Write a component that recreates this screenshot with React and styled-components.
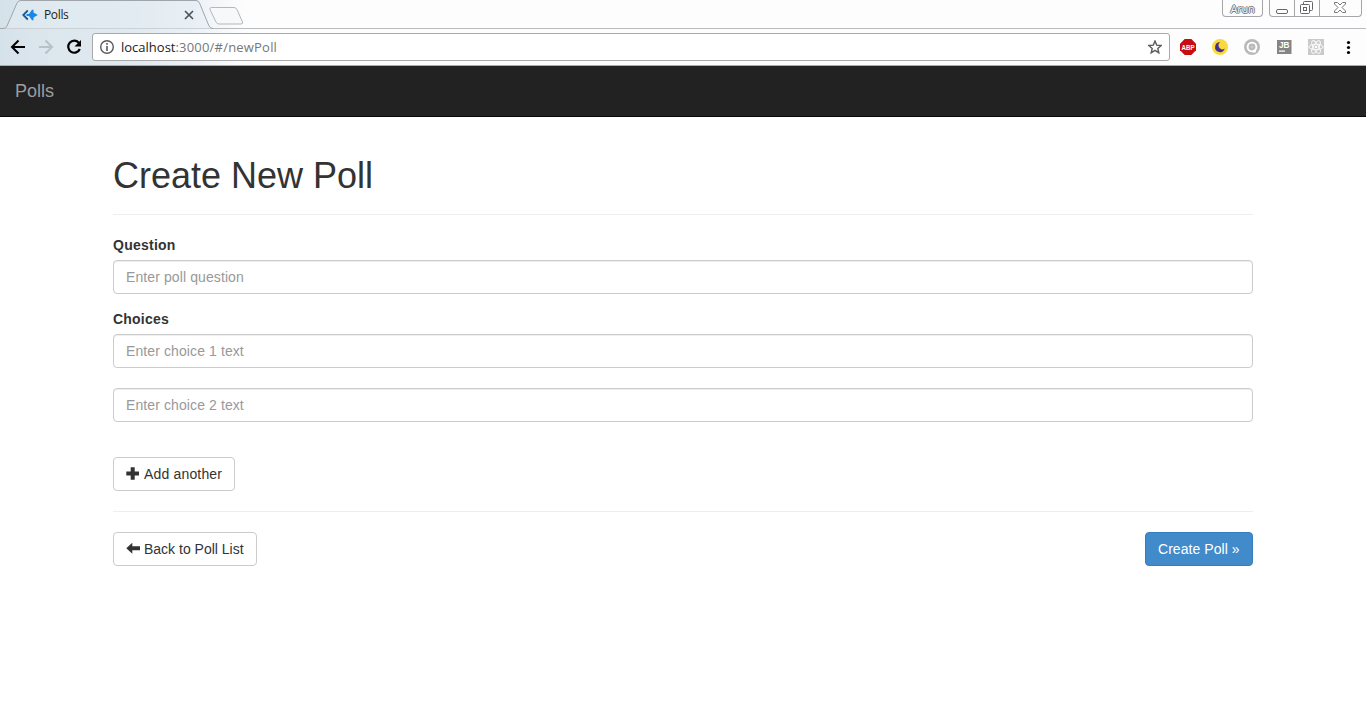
import React from "react";
import styled, { createGlobalStyle } from "styled-components";

const GlobalStyle = createGlobalStyle`
  *, *::before, *::after { box-sizing: border-box; }
  body {
    margin: 0;
    background: #fff;
    color: #333;
    font: 14px/20px "Liberation Sans", Arial, sans-serif;
    overflow: hidden;
  }
`;

const Chrome = styled.header`
  height: 66px;
  display: flex;
  flex-direction: column;
  border-bottom: 1px solid #a9acac;
  background: linear-gradient(90deg, #d6e2ea 0, #dde7ee 60px, #e0e9f0 130px, #ebf0f5 190px, #fdfdfe 245px, #fdfdfd 100%);
`;

const TabStrip = styled.div`
  height: 29px;
  display: flex;
  align-items: flex-start;
  border-bottom: 1px solid #b9babd;
`;

const Tab = styled.div`
  position: relative;
  width: 209px;
  height: 29px;
  flex: none;
  display: flex;
  align-items: center;
  padding: 1px 14px 0 22px;
  font: 12px/16px "Open Sans", "Noto Sans", sans-serif;
  color: #222;
`;

const TabOutline = styled.svg`
  position: absolute;
  left: 0;
  top: 0;
`;

const TabTitle = styled.span`
  position: relative;
  flex: 1;
  margin-left: 6px;
  letter-spacing: -0.35px;
`;

const TabIcon = styled.svg`
  position: relative;
  flex: none;
`;

const Icon = styled.svg`
  display: block;
  flex: none;
`;

const WindowControls = styled.div`
  margin-left: auto;
  margin-right: 4px;
  display: flex;
  gap: 6px;
`;

const ControlGroup = styled.div`
  display: flex;
  height: 17px;
  border: 1px solid #a6a6a9;
  border-top: 0;
  border-radius: 0 0 4px 4px;
  background: #fdfdfd;
`;

const Control = styled.div`
  width: ${(p) => p.$width}px;
  display: flex;
  align-items: center;
  justify-content: center;
  padding: 0 2px 1px 0;
  font: 11px/16px "Open Sans", sans-serif;
  & + & { border-left: 1px solid #a6a6a9; }
`;

const UserName = styled.span`
  margin: 2px 0 0 2px;
  letter-spacing: -0.2px;
  color: #f4f4f4;
  text-shadow: 0 1px #777, 1px 0 #777, -1px 0 #777, 0 -1px #777;
`;

const Toolbar = styled.div`
  flex: 1;
  display: flex;
  align-items: center;
  padding: 0 10px;
`;

const NavIcons = styled.div`
  display: flex;
  gap: 12px;
  width: 82px;
`;

const AddressBar = styled.div`
  width: 1078px;
  height: 28px;
  display: flex;
  align-items: center;
  padding: 0 7px 0 6px;
  border: 1px solid #a9a9ac;
  border-radius: 3px;
  background: #fff;
`;

const Url = styled.span`
  flex: 1;
  margin-left: 6px;
  font: 13px/18px "Open Sans", "Noto Sans", sans-serif;
  letter-spacing: 0.2px;
  color: #777;
`;

const Host = styled.span`
  color: #222;
  letter-spacing: 0;
`;

const Extensions = styled.div`
  display: flex;
  gap: 16px;
  margin-left: 10px;
`;

const Navbar = styled.nav`
  height: 51px;
  padding: 15px;
  background: #222;
  border-bottom: 1px solid #080808;
`;

const Brand = styled.a`
  display: block;
  font-size: 18px;
  line-height: 20px;
  color: #9d9d9d;
`;

const Page = styled.main`
  width: 1140px;
  margin: 39px auto 0;
`;

const PageHeader = styled.div`
  height: 59px;
  border-bottom: 1px solid #eee;
  margin-bottom: 20px;
`;

const Title = styled.h1`
  margin: 0;
  font-size: 36px;
  font-weight: 400;
  line-height: 40px;
`;

const Field = styled.div`
  margin-bottom: ${(p) => p.$gap}px;
`;

const Label = styled.label`
  display: block;
  margin-bottom: 5px;
  font-weight: 700;
  letter-spacing: ${(p) => p.$tracking || 0}px;
`;

const Input = styled.input`
  display: block;
  width: 100%;
  height: 34px;
  padding: 6px 12px;
  border: 1px solid #ccc;
  border-radius: 4px;
  background: #fff;
  box-shadow: inset 0 1px 1px rgba(0, 0, 0, 0.075);
  font: 14px/20px "Liberation Sans", Arial, sans-serif;
  letter-spacing: 0.1px;
  &::placeholder { color: #999; opacity: 1; }
`;

const Button = styled.button`
  display: flex;
  align-items: center;
  gap: 4px;
  height: 34px;
  width: ${(p) => p.$width}px;
  padding: 0 0 0 12px;
  border: 1px solid ${(p) => (p.$primary ? "#357ebd" : "#ccc")};
  border-radius: 4px;
  background: ${(p) => (p.$primary ? "#428bca" : "#fff")};
  color: ${(p) => (p.$primary ? "#fff" : "#333")};
  font: 14px/20px "Liberation Sans", Arial, sans-serif;
  letter-spacing: ${(p) => p.$tracking || 0}px;
  white-space: nowrap;
`;

const Divider = styled.hr`
  margin: 20px 0;
  border: 0;
  border-top: 1px solid #eee;
`;

const Actions = styled.div`
  display: flex;
  justify-content: space-between;
`;

function BrowserTab() {
  return (
    <Tab>
      <TabOutline width="214" height="29" viewBox="0 0 214 29">
        <path d="M0 29V28.5H3Q6 28.5 7 26L17 3Q18.5.5 21 .5H196Q198.500.5 199.500 3L209 26Q210.500 28.500 213 28.500V29Z" fill="#e4edf4" fillOpacity=".45" />
        <path d="M0 28.500H3Q6 28.500 7 26L17 3Q18.500.500 21 .500H196Q198.500.500 199.500 3L209 26Q210.500 28.500 213 28.500" fill="none" stroke="#a0a5aa" />
      </TabOutline>
      <TabIcon width="16" height="12" viewBox="0 0 16 12">
        <path d="M5.800 1.500L1.300 6L5.800 10.500" fill="none" stroke="#145c98" strokeWidth="1.800" />
        <path d="M6.300 6L10 .8H11.500V3.500L15.800 6L11.500 8.500V11.200H10Z" fill="#1689e8" />
        <path d="M4.500 6H7.500" stroke="#1689e8" strokeWidth="2" />
      </TabIcon>
      <TabTitle>Polls</TabTitle>
      <TabIcon width="12" height="10" viewBox="0 0 12 10">
        <path d="M2 1L10 9M10 1L2 9" stroke="#505356" strokeWidth="1.700" />
      </TabIcon>
    </Tab>
  );
}

function BrowserChrome() {
  return (
    <Chrome>
      <TabStrip>
        <BrowserTab />
        <Icon width="36" height="28" viewBox="0 0 36 28">
          <path d="M2.500 7.500H25Q27 7.500 28 9.500L33.500 22Q34.200 24 32 24H10Q8 24 7 22L1 9.500Q.300 7.500 2.500 7.500Z" fill="#f6f8fa" stroke="#b4b7bb" />
        </Icon>
        <WindowControls>
          <ControlGroup>
            <Control $width={39}>
              <UserName>Arun</UserName>
            </Control>
          </ControlGroup>
          <ControlGroup>
            <Control $width={24}>
              <Icon width="14" height="14" viewBox="0 0 14 14">
                <rect x="2.500" y="8.500" width="11" height="4" rx="1.500" fill="#fff" stroke="#66666a" />
              </Icon>
            </Control>
            <Control $width={25}>
              <Icon width="13" height="13" viewBox="0 0 13 13" fill="#fff" stroke="#66666a">
                <rect x="3.500" y=".5" width="9" height="9" rx="1" />
                <rect x=".5" y="3.500" width="9" height="9" rx="1" />
                <rect x="3.500" y="6.500" width="3" height="3" />
              </Icon>
            </Control>
            <Control $width={42}>
              <Icon width="12" height="11" viewBox="0 0 12 11">
                <path d="M.5.5H3.500L6 3L8.500.5H11.500V2L8 5.500L11.500 9V10.500H8.500L6 8L3.500 10.500H.5V9L4 5.500L.5 2Z" fill="#fff" stroke="#77777a" />
              </Icon>
            </Control>
          </ControlGroup>
        </WindowControls>
      </TabStrip>
      <Toolbar>
        <NavIcons>
          <Icon width="16" height="16" viewBox="0 0 16 16" fill="none" stroke="#000" strokeWidth="2">
            <path d="M15 8H2.500M8.500 1.500L2 8L8.500 14.500" />
          </Icon>
          <Icon width="16" height="16" viewBox="0 0 16 16" fill="none" stroke="#b9c0c6" strokeWidth="2">
            <path d="M1 8H13.500M7.500 1.500L14 8L7.500 14.500" />
          </Icon>
          <Icon width="16" height="16" viewBox="0 0 16 16">
            <path d="M12.800 3.800A6 6 0 1 0 13.800 10" fill="none" stroke="#000" strokeWidth="2.200" />
            <path d="M15 1V7.500H8.500Z" />
          </Icon>
        </NavIcons>
        <AddressBar>
          <Icon width="16" height="16" viewBox="0 0 16 16">
            <circle cx="8" cy="8" r="6.300" fill="none" stroke="#5a5a5a" strokeWidth="1.400" />
            <path d="M7.200 4H8.800V5.700H7.200ZM7.200 7H8.800V12H7.200Z" fill="#5a5a5a" />
          </Icon>
          <Url><Host>localhost</Host>:3000/#/newPoll</Url>
          <Icon width="14" height="14" viewBox="0 0 14 14">
            <path d="M7 1L8.700 5.100L13.200 5.500L9.800 8.400L10.800 12.800L7 10.400L3.200 12.800L4.200 8.400L.8 5.500L5.300 5.100Z" fill="none" stroke="#5a5a5a" strokeWidth="1.400" />
          </Icon>
        </AddressBar>
        <Extensions>
          <Icon width="16" height="16" viewBox="0 0 16 16">
            <path d="M4.700 0H11.300L16 4.700V11.300L11.300 16H4.700L0 11.300V4.700Z" fill="#c70d0d" />
            <text x="1.500" y="10.800" textLength="13" lengthAdjust="spacingAndGlyphs" fontFamily="Liberation Sans, sans-serif" fontSize="8" fontWeight="700" fill="#fff">ABP</text>
          </Icon>
          <Icon width="16" height="16" viewBox="0 0 16 16">
            <circle cx="8" cy="8" r="8" fill="#fbd93b" />
            <path d="M8.200 3.300A4.900 4.900 0 1 0 12.700 9.500A3.800 3.800 0 0 1 8.200 3.300Z" fill="#44318d" />
          </Icon>
          <Icon width="16" height="16" viewBox="0 0 16 16">
            <circle cx="8" cy="8" r="8" fill="#bababa" />
            <circle cx="8" cy="8" r="4.400" fill="none" stroke="#fff" strokeWidth="1.900" />
            <path d="M8.500 11.500L12 9.500V13L9.500 14Z" fill="#fff" />
            <circle cx="8" cy="8" r="1.300" fill="#ccc" />
          </Icon>
          <Icon width="16" height="16" viewBox="0 0 16 16">
            <rect x="1" y="1" width="14.500" height="14" fill="#858585" />
            <text x="3" y="8.800" textLength="10.500" lengthAdjust="spacingAndGlyphs" fontFamily="Liberation Sans, sans-serif" fontSize="8.500" fontWeight="700" fill="#fff">JB</text>
            <rect x="3" y="11.500" width="6" height="1.200" fill="#fff" />
          </Icon>
          <Icon width="16" height="16" viewBox="0 0 16 16">
            <rect width="16" height="16" fill="#cacaca" />
            <g fill="none" stroke="#fff" strokeWidth=".9">
              <ellipse cx="8" cy="8" rx="7" ry="2.700" />
              <ellipse cx="8" cy="8" rx="7" ry="2.700" transform="rotate(60 8 8)" />
              <ellipse cx="8" cy="8" rx="7" ry="2.700" transform="rotate(120 8 8)" />
            </g>
            <circle cx="8" cy="8" r="1.300" fill="#fff" />
          </Icon>
          <Icon width="16" height="16" viewBox="0 0 16 16">
            <circle cx="8.500" cy="3.500" r="1.600" />
            <circle cx="8.500" cy="8.500" r="1.600" />
            <circle cx="8.500" cy="13.500" r="1.600" />
          </Icon>
        </Extensions>
      </Toolbar>
    </Chrome>
  );
}

export default function App() {
  return (
    <>
      <GlobalStyle />
      <BrowserChrome />
      <Navbar>
        <Brand>Polls</Brand>
      </Navbar>
      <Page>
        <PageHeader>
          <Title>Create New Poll</Title>
        </PageHeader>
        <Field $gap={15}>
          <Label htmlFor="question" $tracking={0.25}>Question</Label>
          <Input id="question" placeholder="Enter poll question" />
        </Field>
        <Field $gap={20}>
          <Label htmlFor="choice1" $tracking={0.2}>Choices</Label>
          <Input id="choice1" placeholder="Enter choice 1 text" />
        </Field>
        <Field $gap={35}>
          <Input placeholder="Enter choice 2 text" />
        </Field>
        <Button $width={122} $tracking={0.17}>
          <Icon width="14" height="14" viewBox="0 0 14 14">
            <path d="M4.700.200H8.700V4.500H13V8.500H8.700V12.800H4.700V8.500H.300V4.500H4.700Z" fill="#333" />
          </Icon>
          Add another
        </Button>
        <Divider />
        <Actions>
          <Button $width={144}>
            <Icon width="14" height="14" viewBox="0 0 14 14">
              <path d="M.300 6.300L6.300.800V4.300H14V8.300H6.300V11.800Z" fill="#333" />
            </Icon>
            Back to Poll List
          </Button>
          <Button $primary $width={108} $tracking={0.05}>Create Poll »</Button>
        </Actions>
      </Page>
    </>
  );
}
